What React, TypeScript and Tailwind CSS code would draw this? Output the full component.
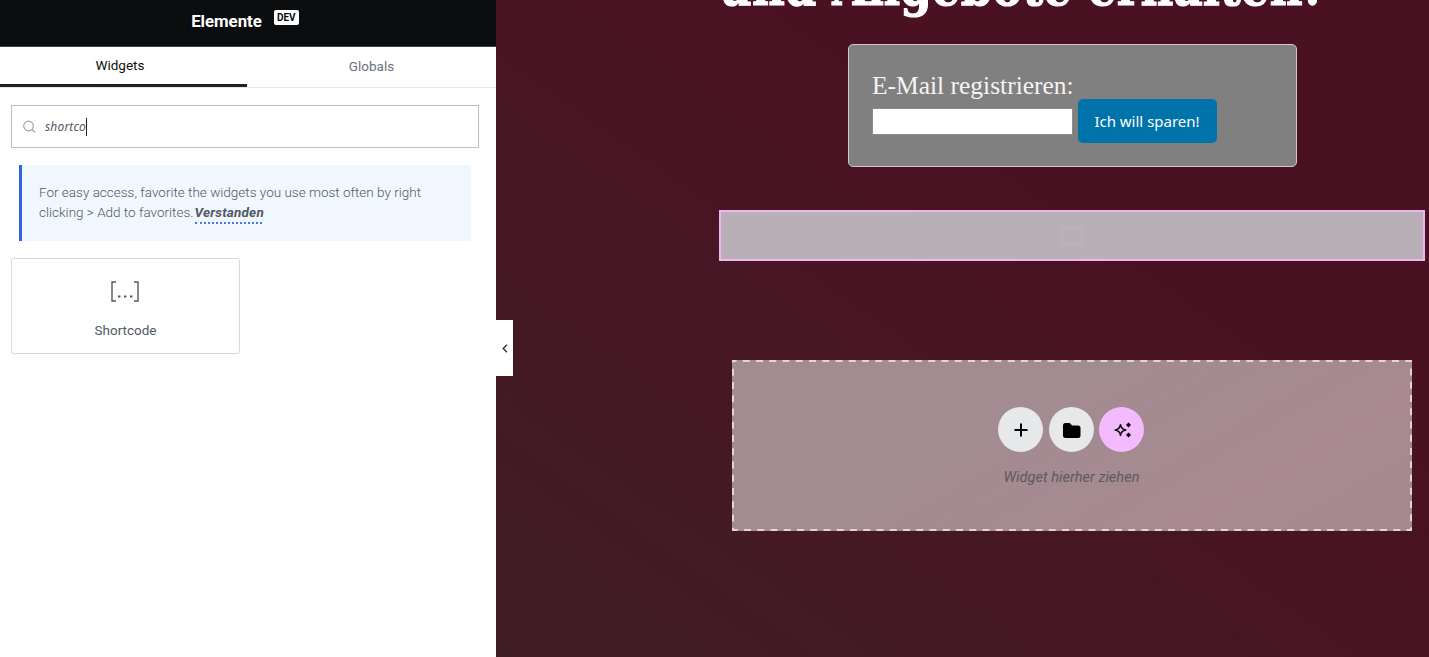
import React from "react";

function SidePanel() {
  return (
    <aside className="flex h-full w-[496px] shrink-0 flex-col bg-white font-['Roboto',sans-serif]">
      <header className="flex h-[47px] items-start justify-center border-b border-[#3f444b] bg-[#0c0d0e] pr-[6px] pt-[9px]">
        <h1 className="text-[16.8px] leading-6 font-bold text-white">Elemente</h1>
        <span className="ml-3 mt-[1px] h-[15px] w-[25px] rounded-[2px] bg-white text-center text-[10px] leading-[15px] font-bold text-[#0c0d0e]">DEV</span>
      </header>
      <nav className="flex h-[41px] border-b border-[#e6e8ea] text-[13.5px]">
        <button className="w-[247px] border-b-[3px] border-[#1f2124] pr-[7px] text-[#0c0d0e]">Widgets</button>
        <button className="flex-1 pb-[2px] text-[#69727d]">Globals</button>
      </nav>
      <div className="ml-[11px] mt-[17px] flex h-[43px] w-[468px] items-center border border-[#babfc5] pl-[11px]">
        <svg className="size-[13px]" viewBox="0 0 13 13" fill="none" stroke="#9da5ae" strokeWidth="1.2" strokeLinecap="round">
          <circle cx="5.5" cy="6" r="4.8" />
          <path d="M9.2 9.7 11.8 12" />
        </svg>
        <span className="ml-[9px] font-['Noto_Sans',sans-serif] text-[12px] tracking-[0.17px] text-[#515962] italic">shortco</span>
        <span className="h-[18px] w-px bg-[#222]" />
      </div>
      <div className="ml-[19px] mt-[17px] h-[76px] w-[452px] border-l-[3px] border-[#2f63df] bg-[#f0f7ff] pl-[17px] pt-[17px] text-[13.5px] leading-[21px] font-light text-[#515962]">
        <p className="h-5 whitespace-nowrap">For easy access, favorite the widgets you use most often by right</p>
        <p className="flex whitespace-nowrap">
          clicking &gt; Add to favorites.
          <span className="ml-px h-[22px] w-[67px] border-b-2 border-dotted border-[#4a76e0] font-bold tracking-[0.2px] italic">Verstanden</span>
        </p>
      </div>
      <div className="ml-[11px] mt-[17px] flex h-[96px] w-[229px] flex-col items-center rounded-[3px] border border-[#d5d8dc] text-[#515962]">
        <svg className="mr-[2px] mt-[22px] h-[22px] w-[28px]" viewBox="0 0 28 22" fill="none" stroke="currentColor" strokeWidth="1.4">
          <path d="M5 1H1V20H5M23 1H27V20H23" />
          <path d="M7 15.5h2.4M13 15.5h2.4M19 15.5h2.4" strokeWidth="2.2" />
        </svg>
        <span className="mt-[17px] text-[13.5px] leading-5">Shortcode</span>
      </div>
    </aside>
  );
}

function RegisterForm() {
  return (
    <form className="ml-[352px] mt-[44px] h-[123px] w-[449px] rounded-[5px] border border-[#d0c8ca] bg-[#808080] pl-[23px] pt-[25px]">
      <label className="block h-[29px] origin-left scale-x-[0.98] font-['Liberation_Serif',serif] text-[26px] leading-[32px] whitespace-nowrap text-[#f4f4f4]">E-Mail registrieren:</label>
      <div className="flex">
        <input className="mt-[9px] h-[27px] w-[201px] border border-[#8c8c8c] bg-white" />
        <button type="button" className="ml-[5px] h-[44px] w-[139px] rounded-[5px] bg-[#0073aa] pr-px font-['Noto_Sans',sans-serif] text-[15px] text-white">Ich will sparen!</button>
      </div>
    </form>
  );
}

function DropArea() {
  return (
    <section className="relative ml-[236px] mt-[98px] flex h-[171px] w-[680px] flex-col items-center bg-[linear-gradient(150deg,#a28b91_0%,#a28b91_40%,#a88990_75%,#a58990_100%)] pt-[47px]">
      <svg className="absolute inset-0 h-full w-full" viewBox="0 0 680 171" fill="none">
        <rect x="1" y="1" width="678" height="169" stroke="#e2d5d8" strokeWidth="2" strokeDasharray="7 6.25" strokeDashoffset="3.5" />
      </svg>
      <div className="flex gap-[5.5px] pr-[2px]">
        <button className="flex size-[45px] items-center justify-center rounded-full bg-[#e6e8ea]">
          <svg className="size-[14px]" viewBox="0 0 14 14" stroke="#000" strokeWidth="2"><path d="M7 0.5v13M.5 7h13" /></svg>
        </button>
        <button className="flex size-[45px] items-center justify-center rounded-full bg-[#e6e8ea]">
          <svg className="ml-px mt-px h-[15px] w-[18px]" viewBox="0 0 18 15" fill="#000"><path d="M2.5 0h4.2l2.5 2.5H15a2.5 2.5 0 0 1 2.5 2.5v7.5A2.5 2.5 0 0 1 15 15H2.5A2.5 2.5 0 0 1 0 12.5v-10A2.5 2.5 0 0 1 2.5 0Z" /></svg>
        </button>
        <button className="flex size-[45px] items-center justify-center rounded-full bg-[#f3bafd]">
          <svg className="ml-[2px] mt-px size-[18px]" viewBox="0 0 18 18">
            <path d="M6.5 3.7Q7.2 8.3 11.8 9Q7.2 9.7 6.5 14.3Q5.8 9.7 1.2 9Q5.8 8.3 6.5 3.7Z" fill="none" stroke="#000" strokeWidth="1.5" strokeLinejoin="round" />
            <path d="M14.5 2Q14.9 3.6 16.5 4Q14.9 4.4 14.5 6Q14.1 4.4 12.5 4Q14.1 3.6 14.5 2ZM14.5 12Q14.9 13.6 16.5 14Q14.9 14.4 14.5 16Q14.1 14.4 12.5 14Q14.1 13.6 14.5 12Z" fill="#000" stroke="#000" strokeWidth="1.2" />
          </svg>
        </button>
      </div>
      <p className="mt-[14px] pr-px font-['Roboto',sans-serif] text-[14.6px] leading-[23px] text-[#5d5961] italic">Widget hierher ziehen</p>
    </section>
  );
}

function Canvas() {
  return (
    <main className="relative h-full flex-1 overflow-hidden bg-[linear-gradient(35deg,#3f1d25_0%,#461724_35%,#4a1122_65%,#4a1122_100%)]">
      <h2 className="absolute left-[223px] top-[-51px] origin-left scale-x-[0.838] font-['DejaVu_Serif',serif] text-[54px] leading-[74px] font-bold whitespace-nowrap text-white [-webkit-text-stroke:1.2px_white]">und Angebote erhalten!</h2>
      <RegisterForm />
      <section className="ml-[223px] mt-[43px] flex h-[51px] w-[706px] items-center justify-center border-2 border-[#edb6ef] bg-[#b9b0b7]">
        <span className="h-[17px] w-[20px] border border-[#c0b4bd]" />
      </section>
      <div className="pt-px">
        <DropArea />
      </div>
      <button className="absolute left-0 top-[320px] flex h-[56px] w-[17px] items-center justify-center bg-white">
        <svg className="h-[9px] w-[6px]" viewBox="0 0 6 9" fill="none" stroke="#333" strokeWidth="1.4"><path d="M5 .7 1.2 4.5 5 8.3" /></svg>
      </button>
    </main>
  );
}

export default function App() {
  return (
    <div className="flex h-[657px] w-[1429px] overflow-hidden">
      <SidePanel />
      <Canvas />
    </div>
  );
}
